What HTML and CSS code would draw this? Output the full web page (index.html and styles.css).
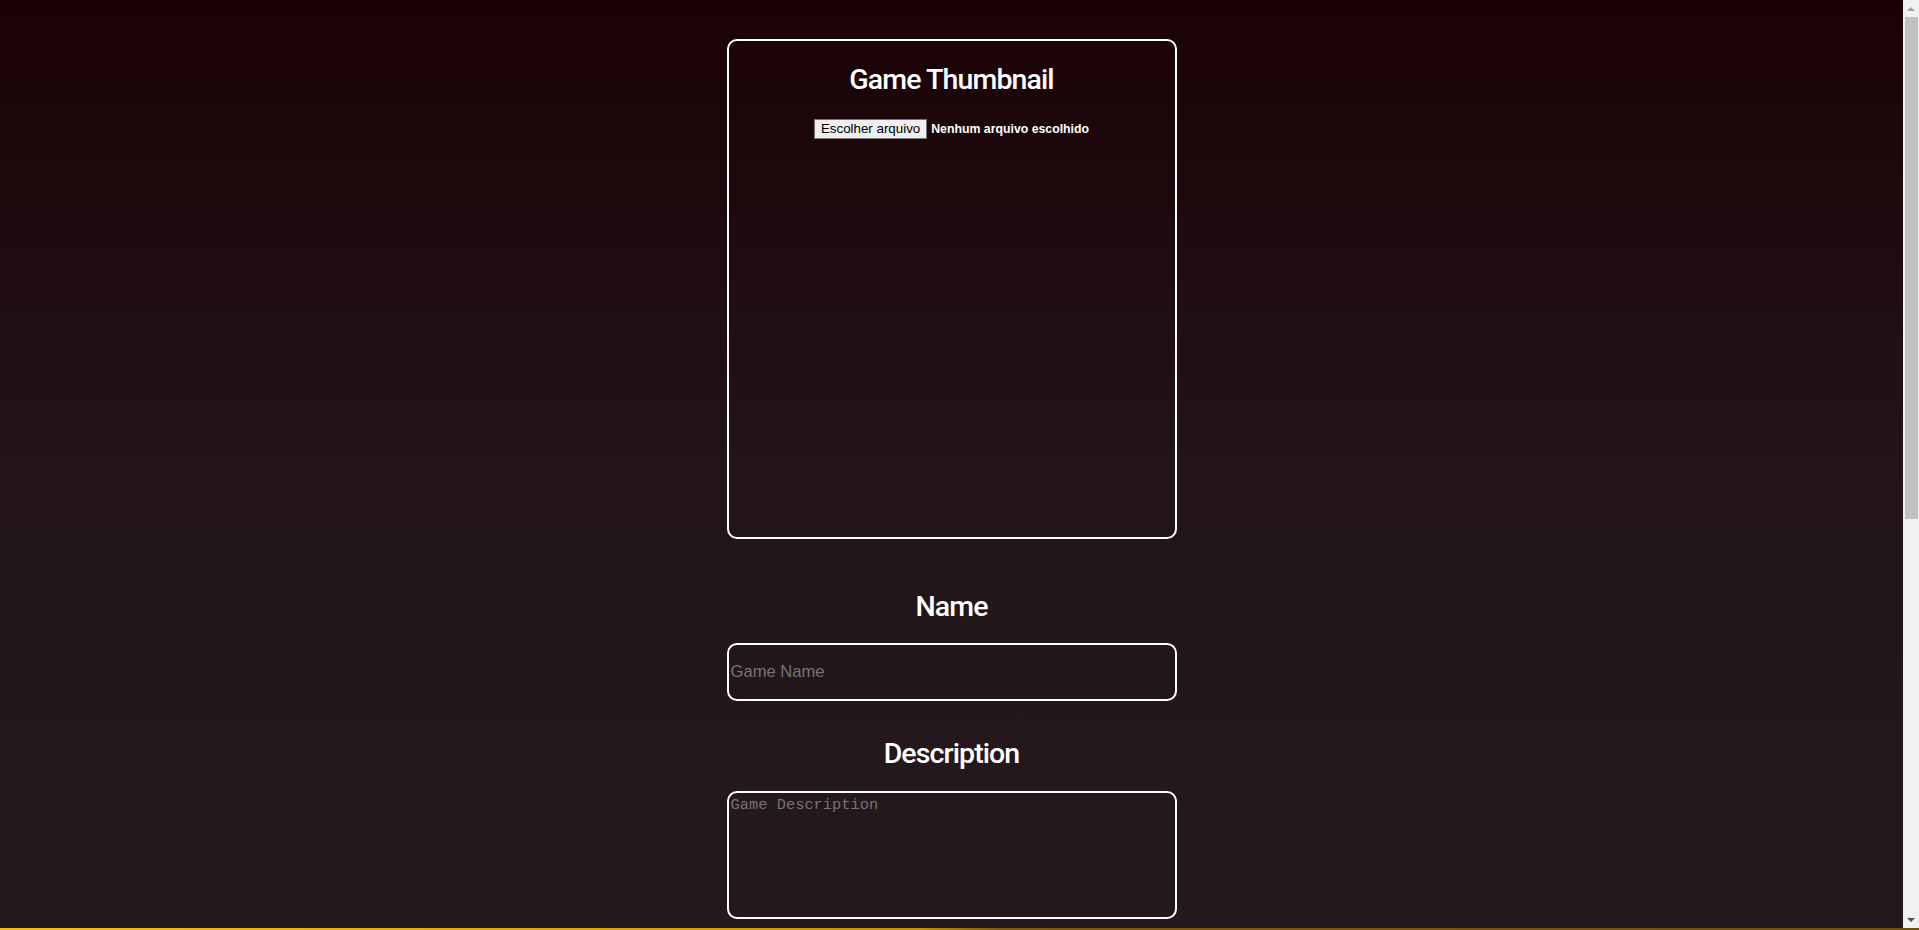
FILE: index.html
```html
<!DOCTYPE html>
<html lang="pt">
<head>
<meta charset="utf-8">
<title>New Game</title>
<link rel="stylesheet" href="styles.css">
</head>
<body>
<main class="page">
  <section class="thumb">
    <h2 class="label thumb-title">Game Thumbnail</h2>
    <div class="file">
      <button class="file-btn" type="button">Escolher arquivo</button>
      <span class="file-name">Nenhum arquivo escolhido</span>
    </div>
  </section>

  <h2 class="label name-label">Name</h2>
  <input class="field name-field" type="text" placeholder="Game Name">

  <h2 class="label desc-label">Description</h2>
  <textarea class="field desc-field" placeholder="Game Description"></textarea>
</main>
<div class="footer-band"></div>

<div class="scrollbar" aria-hidden="true">
  <div class="sb-btn sb-up"><span class="tri tri-up"></span></div>
  <div class="sb-track"><div class="sb-thumb"></div></div>
  <div class="sb-btn sb-down"><span class="tri tri-down"></span></div>
</div>
</body>
</html>
```

FILE: styles.css
```css
html, body {
  margin: 0;
  padding: 0;
}

body {
  min-height: 100vh;
  background: linear-gradient(180deg, #1b0206 0px, #221418 460px, #241a1d 930px, #241a1d 100%);
  background-color: #241a1d;
  color: #ffffff;
  font-family: Roboto, "Liberation Sans", Arial, sans-serif;
  overflow-x: hidden;
}

.page {
  display: flex;
  flex-direction: column;
  align-items: center;
  padding-top: 39px;
  padding-right: 16px;
}

.thumb {
  box-sizing: border-box;
  width: 450px;
  height: 500px;
  border: 2px solid #ffffff;
  border-radius: 10px;
  display: flex;
  flex-direction: column;
  align-items: center;
}

.label {
  margin: 0;
  font-family: Roboto, "Liberation Sans", Arial, sans-serif;
  font-size: 28.5px;
  font-weight: 500;
  letter-spacing: -0.9px;
  line-height: 34px;
  color: #ffffff;
}

.thumb-title {
  margin-top: 21.5px;
}

.file {
  margin-top: 22px;
  display: flex;
  align-items: center;
  font-family: "Liberation Sans", Arial, sans-serif;
  font-size: 13.33px;
}

.file-btn {
  box-sizing: border-box;
  height: 20px;
  padding: 0 6px;
  background: #efefef;
  border: 1px solid #767676;
  border-radius: 0;
  color: #000000;
  font-family: "Liberation Sans", Arial, sans-serif;
  font-size: 13.33px;
  line-height: 18px;
}

.file-name {
  margin-left: 4px;
  font-size: 12.3px;
  font-weight: bold;
  color: #ffffff;
}

.name-label {
  margin-top: 50.5px;
}

.field {
  box-sizing: border-box;
  width: 450px;
  border: 2px solid #ffffff;
  border-radius: 10px;
  background: transparent;
  color: #ffffff;
  outline: none;
  margin: 0;
}

.field::placeholder {
  color: #757575;
  opacity: 1;
}

.name-field {
  margin-top: 19.5px;
  height: 58px;
  padding: 0 2px;
  font-family: "Liberation Sans", Arial, sans-serif;
  font-size: 16.6px;
}

.desc-label {
  margin-top: 35.5px;
}

.desc-field {
  margin-top: 20.5px;
  height: 128px;
  padding: 3px 2px;
  resize: none;
  font-family: "Liberation Mono", "DejaVu Sans Mono", monospace;
  font-size: 15.4px;
  display: block;
}

.footer-band {
  margin-top: 9px;
  height: 720px;
  border-top: 2px solid transparent;
  border-image: linear-gradient(90deg, #f2c200 0%, #d9a800 30%, #c09300 48%, #7d5b0c 52%, #6e500e 100%) 1;
}

/* fake classic scrollbar overlaying the right edge */
.scrollbar {
  position: fixed;
  top: 0;
  right: 0;
  width: 16px;
  height: calc(100vh - 2px);
  background: #f1f1f1;
  display: flex;
  flex-direction: column;
}

.sb-btn {
  height: 17px;
  display: flex;
  align-items: center;
  justify-content: center;
  flex: none;
}

.sb-track {
  flex: 1;
  position: relative;
}

.sb-thumb {
  margin-left: 2px;
  margin-right: 1px;
  height: 502px;
  background: #c1c1c1;
}

.tri {
  width: 0;
  height: 0;
  border-left: 4px solid transparent;
  border-right: 4px solid transparent;
}

.tri-up {
  border-bottom: 4px solid #a3a3a3;
}

.tri-down {
  border-top: 4px solid #505050;
}
```
